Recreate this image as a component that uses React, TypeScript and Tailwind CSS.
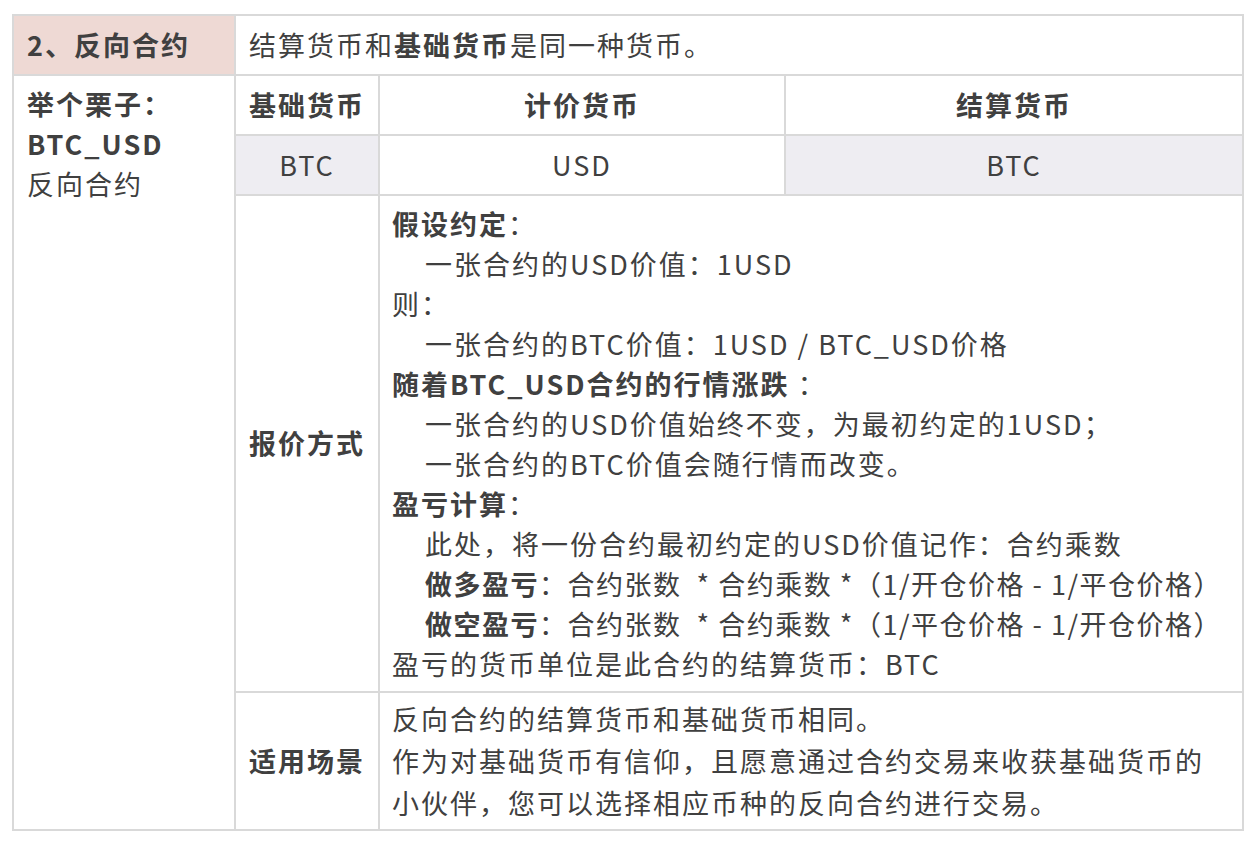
import React from "react";

const cell = "bg-white";
const indent = "pl-[33px] whitespace-nowrap";

export default function App() {
  return (
    <div
      className="min-h-screen bg-white pl-[12px] pt-[14px] text-[27px] tracking-[2px] text-[#404040]"
      style={{ fontFamily: '"Noto Sans CJK SC", "Liberation Sans", sans-serif' }}
    >
      <div className="grid w-[1232px] grid-cols-[220px_142px_404px_456px] gap-[2px] bg-[#d9d9d9] p-[2px]">
        {/* row 1 */}
        <div className="flex h-[58px] items-center bg-[#eed9d4] px-[13px] font-bold">2、反向合约</div>
        <div className={`${cell} col-span-3 flex h-[58px] items-center px-[13px]`}>
          <span>
            结算货币和<b className="font-bold">基础货币</b>是同一种货币。
          </span>
        </div>

        {/* example column */}
        <div className={`${cell} row-span-4 px-[13px] pt-[8px] leading-[40px]`}>
          <div className="font-bold">举个栗子：</div>
          <div className="font-bold">BTC_USD</div>
          <div>反向合约</div>
        </div>

        {/* header row */}
        <div className={`${cell} flex h-[58px] items-center justify-center font-bold`}>基础货币</div>
        <div className={`${cell} flex h-[58px] items-center justify-center font-bold`}>计价货币</div>
        <div className={`${cell} flex h-[58px] items-center justify-center font-bold`}>结算货币</div>

        {/* values row */}
        <div className="flex h-[58px] items-center justify-center bg-[#eeedf2]">BTC</div>
        <div className={`${cell} flex h-[58px] items-center justify-center`}>USD</div>
        <div className="flex h-[58px] items-center justify-center bg-[#eeedf2]">BTC</div>

        {/* 报价方式 */}
        <div className={`${cell} flex items-center justify-center font-bold`}>报价方式</div>
        <div className={`${cell} col-span-2 px-3 pb-[7px] pt-[8px] leading-[40px]`}>
          <div>
            <b className="font-bold">假设约定</b>：
          </div>
          <div className={indent}>一张合约的USD价值：1USD</div>
          <div>则：</div>
          <div className={indent}>一张合约的BTC价值：1USD / BTC_USD价格</div>
          <div>
            <b className="font-bold">随着BTC_USD合约的行情涨跌</b> ：
          </div>
          <div className={indent}>一张合约的USD价值始终不变，为最初约定的1USD；</div>
          <div className={indent}>一张合约的BTC价值会随行情而改变。</div>
          <div>
            <b className="font-bold">盈亏计算</b>：
          </div>
          <div className={indent}>此处，将一份合约最初约定的USD价值记作：合约乘数</div>
          <div className={`${indent} tracking-[1.5px]`}>
            <b className="font-bold">做多盈亏</b>：合约张数 &nbsp;* 合约乘数 *（1/开仓价格 - 1/平仓价格）
          </div>
          <div className={`${indent} tracking-[1.5px]`}>
            <b className="font-bold">做空盈亏</b>：合约张数 &nbsp;* 合约乘数 *（1/平仓价格 - 1/开仓价格）
          </div>
          <div>盈亏的货币单位是此合约的结算货币：BTC</div>
        </div>

        {/* 适用场景 */}
        <div className={`${cell} flex items-center justify-center font-bold`}>适用场景</div>
        <div className={`${cell} col-span-2 px-3 py-[5px] leading-[42px]`}>
          <div>反向合约的结算货币和基础货币相同。</div>
          <div className="whitespace-nowrap">作为对基础货币有信仰，且愿意通过合约交易来收获基础货币的</div>
          <div>小伙伴，您可以选择相应币种的反向合约进行交易。</div>
        </div>
      </div>
    </div>
  );
}
